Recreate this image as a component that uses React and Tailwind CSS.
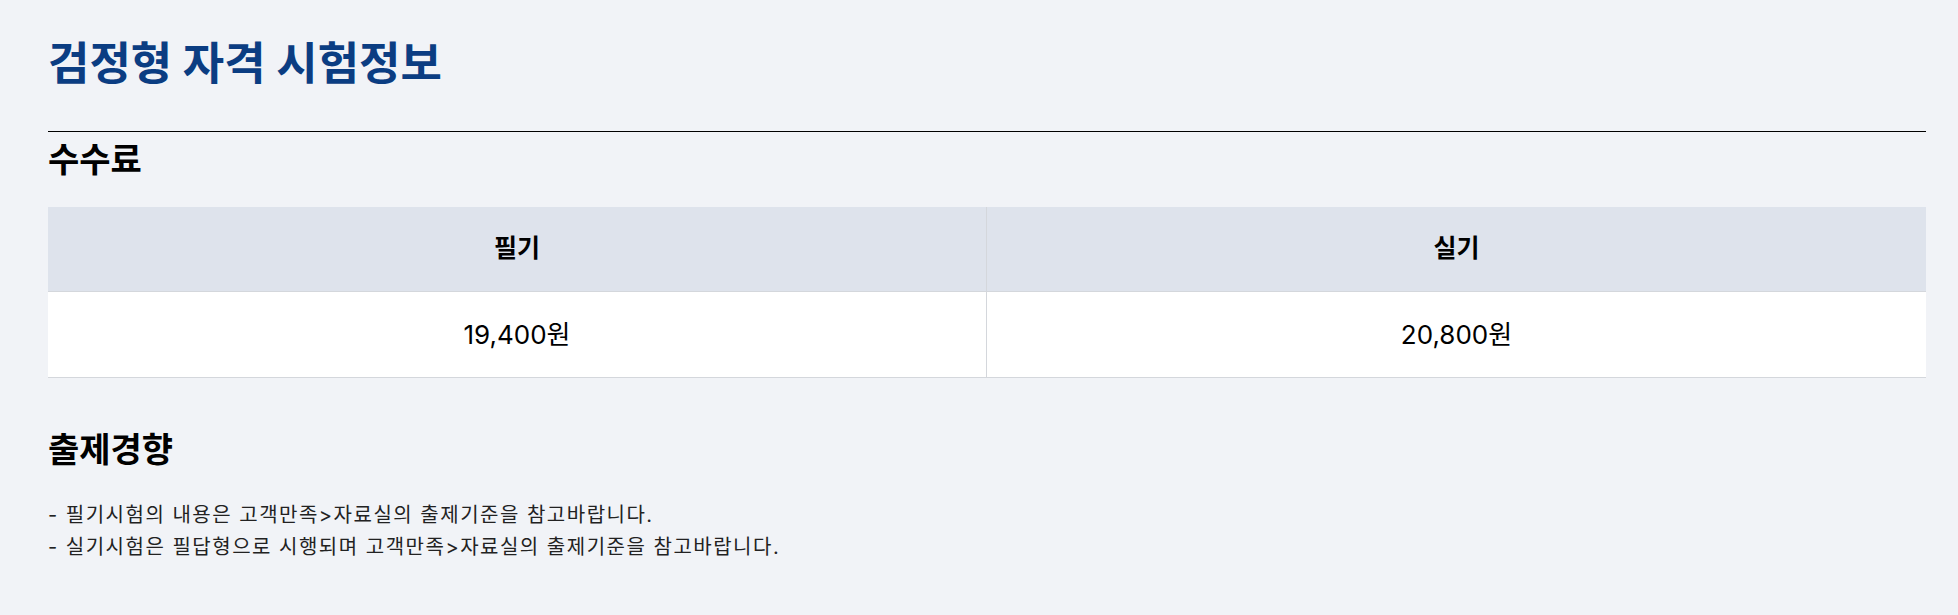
const fees = [
  { label: "필기", price: "19,400원" },
  { label: "실기", price: "20,800원" },
];

const trends = [
  "- 필기시험의 내용은 고객만족>자료실의 출제기준을 참고바랍니다.",
  "- 실기시험은 필답형으로 시행되며 고객만족>자료실의 출제기준을 참고바랍니다.",
];

export default function App() {
  return (
    <div
      className="min-h-screen bg-[#f1f3f7] pl-12 pr-8 pt-[37px] text-black"
      style={{ fontFamily: 'Inter, "Noto Sans CJK KR", sans-serif' }}
    >
      <h1 className="text-[45px] font-bold leading-[54px] text-[#0b3d82]">
        검정형 자격 시험정보
      </h1>

      <section className="mt-[40px] border-t border-black">
        <h2 className="mt-[6px] text-[34px] font-bold leading-[44px]">수수료</h2>
        <div className="mt-[25px] grid grid-cols-2 border-b border-[#d4d7dc]">
          {fees.map((f, i) => (
            <div
              key={f.label}
              className={i === 0 ? "border-r border-[#d4d7dc]" : ""}
            >
              <div className="flex h-[85px] items-center justify-center border-b border-[#d4d7dc] bg-[#dee3ec] text-[25px] font-bold">
                {f.label}
              </div>
              <div className="flex h-[85px] items-center justify-center bg-white text-[26px]">
                {f.price}
              </div>
            </div>
          ))}
        </div>
      </section>

      <section className="mt-[50px]">
        <h2 className="text-[34px] font-bold leading-[44px]">출제경향</h2>
        <ul className="mt-[27px] text-[20px] leading-[32px] tracking-[1.5px] text-[#222]">
          {trends.map((t) => (
            <li key={t}>{t}</li>
          ))}
        </ul>
      </section>
    </div>
  );
}
